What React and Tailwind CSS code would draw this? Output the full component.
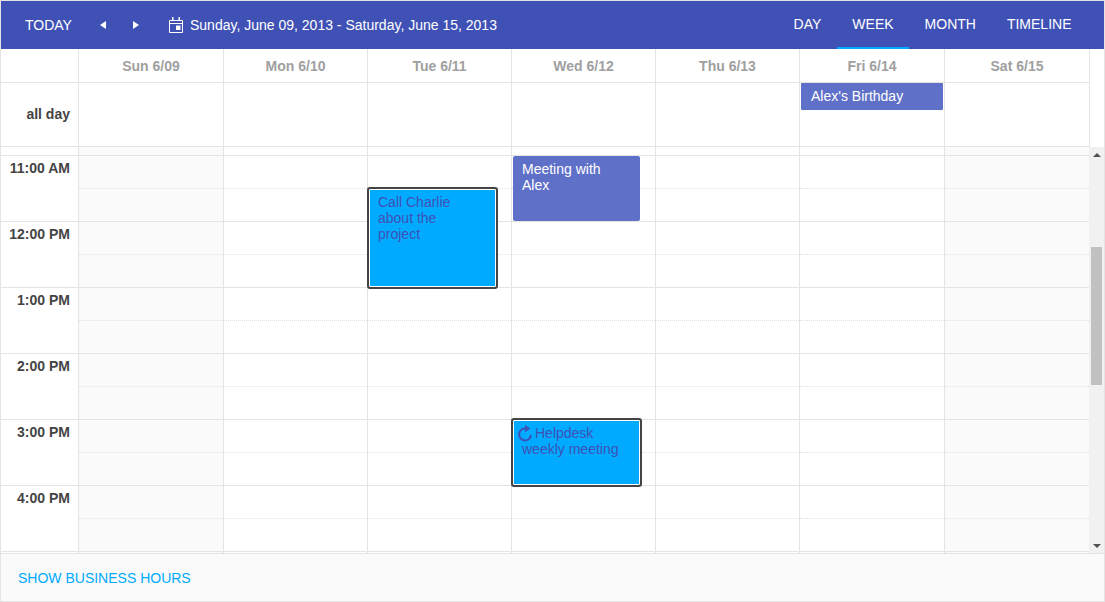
import React from 'react';

const days = [
    { label: 'Sun 6/09', width: 'w-[145px]', off: true },
    { label: 'Mon 6/10', width: 'w-[144px]' },
    { label: 'Tue 6/11', width: 'w-[144px]' },
    { label: 'Wed 6/12', width: 'w-[144px]' },
    { label: 'Thu 6/13', width: 'w-[144px]' },
    { label: 'Fri 6/14', width: 'w-[145px]' },
    { label: 'Sat 6/15', width: 'w-[145px]', off: true },
];

const hours = ['11:00 AM', '12:00 PM', '1:00 PM', '2:00 PM', '3:00 PM', '4:00 PM'];
const views = ['DAY', 'WEEK', 'MONTH', 'TIMELINE'];

const CalendarIcon = () => (
    <svg width="14" height="16" viewBox="0 0 14 16" className="shrink-0">
        <path d="M.5 3.5h13v12H.5zM.5 6.5h13" fill="none" stroke="#fff" strokeWidth="1" />
        <path d="M3 0h1.5v3.5H3zM9.5 0H11v3.5H9.5zM7 8.5h4.5V13H7z" fill="#fff" />
    </svg>
);

const RecurIcon = () => (
    <svg width="14" height="17" viewBox="0 0 14 17" className="inline-block align-baseline my-[-4px] ml-[-4px] mr-[3px]">
        <path d="M7 3.6A5.9 5.9 0 1 0 12.9 9.9" fill="none" stroke="#3f51b5" strokeWidth="2" />
        <path d="M7 0v7.2L12.4 3.6z" fill="#3f51b5" />
    </svg>
);

const Birthday = () => (
    <div className="absolute left-[1px] top-0 w-[142px] h-[27px] bg-[#5f70c8] rounded-[1px] pl-[10px] text-white leading-[26px]">
        Alex's Birthday
    </div>
);

const Meeting = () => (
    <div className="absolute z-10 left-[1px] top-[9px] w-[127px] h-[65px] bg-[#5f70c8] rounded-[2px] pl-[9px] pt-[5px] pr-[30px] text-white leading-4">
        Meeting with Alex
    </div>
);

const FocusedEvent = ({ className, children }) => (
    <div className={`absolute z-10 left-[-1px] w-[131px] bg-[#00aaff] border-2 border-[#444] rounded-[3px] shadow-[inset_0_0_0_1px_#fff] text-[#3f51b5] leading-4 ${className}`}>
        {children}
    </div>
);

const DayColumn = ({ day, last, children }) => (
    <div className={`relative h-full ${last ? 'w-[144px]' : `${day.width} border-r border-[#e4e4e4]`} ${day.off ? 'bg-[#fafafa]' : ''}`}>
        <div className="h-[9px] border-b border-[#e4e4e4]" />
        {hours.map((hour) => (
            <div key={hour} className="h-[66px] border-b border-[#e4e4e4]">
                <div className="h-[33px] border-b border-dotted border-[#e2e2e2]" />
            </div>
        ))}
        {children}
    </div>
);

export default function App() {
    return (
        <div className="w-[1105px] h-[602px] border border-[#e4e4e4] overflow-hidden flex flex-col bg-white text-sm font-['Liberation_Sans',Arial,sans-serif]">
            <div className="h-[48px] shrink-0 flex items-center bg-[#3f51b5] text-white pl-[24px] pr-[17px]">
                <span className="w-[46px]">TODAY</span>
                <div className="ml-[28px] w-[7px] h-[8px] flex items-center">
                    <svg width="7" height="8" viewBox="0 0 7 8"><path d="M7 0v8L1 4z" fill="#fff" /></svg>
                </div>
                <div className="ml-[26px] w-[7px] h-[8px] flex items-center">
                    <svg width="7" height="8" viewBox="0 0 7 8"><path d="M1 0v8l6-4z" fill="#fff" /></svg>
                </div>
                <div className="ml-[30px] flex items-center gap-[7px]">
                    <CalendarIcon />
                    <span>Sunday, June 09, 2013 - Saturday, June 15, 2013</span>
                </div>
                <div className="ml-auto flex h-full">
                    {views.map((view) => (
                        <div
                            key={view}
                            className={`h-full flex items-center px-[15.5px] border-b-2 ${view === 'WEEK' ? 'border-[#00aaff]' : 'border-transparent'}`}
                        >
                            {view}
                        </div>
                    ))}
                </div>
            </div>

            <div className="h-[34px] shrink-0 flex border-b border-[#e4e4e4] mr-[14px]">
                <div className="w-[78px] border-r border-[#e4e4e4]" />
                {days.map((day) => (
                    <div key={day.label} className={`${day.width} border-r border-[#e4e4e4] flex items-center justify-center font-bold text-[#a0a0a0]`}>
                        {day.label}
                    </div>
                ))}
            </div>

            <div className="h-[64px] shrink-0 flex border-b border-[#e4e4e4] mr-[14px]">
                <div className="w-[78px] border-r border-[#e4e4e4] flex items-center justify-end pr-[8px] pb-[2px] font-bold text-[#444]">all day</div>
                {days.map((day) => (
                    <div key={day.label} className={`relative ${day.width} border-r border-[#e4e4e4]`}>
                        {day.label === 'Fri 6/14' && <Birthday />}
                    </div>
                ))}
            </div>

            <div className="h-[407px] shrink-0 flex border-b border-[#e4e4e4] overflow-hidden">
                <div className="w-[78px] h-full border-r border-[#e4e4e4]">
                    <div className="h-[9px] border-b border-[#e4e4e4]" />
                    {hours.map((hour) => (
                        <div key={hour} className="h-[66px] border-b border-[#e4e4e4] pt-[4px] pr-[8px] text-right font-bold text-[#444] leading-4">
                            {hour}
                        </div>
                    ))}
                </div>
                {days.map((day, i) => (
                    <DayColumn key={day.label} day={day} last={i === days.length - 1}>
                        {day.label === 'Tue 6/11' && (
                            <FocusedEvent className="top-[40px] h-[102px] pl-[9px] pt-[5px] pr-[30px]">
                                Call Charlie about the project
                            </FocusedEvent>
                        )}
                        {day.label === 'Wed 6/12' && (
                            <>
                                <Meeting />
                                <FocusedEvent className="top-[271px] h-[69px] pl-[9px] pt-[5px] pr-[10px]">
                                    <RecurIcon />
                                    Helpdesk weekly meeting
                                </FocusedEvent>
                            </>
                        )}
                    </DayColumn>
                ))}
                <div className="w-[15px] h-full bg-[#f1f1f1] flex flex-col items-center">
                    <div className="h-[15px] w-full flex items-center justify-center">
                        <svg width="8" height="4" viewBox="0 0 8 4"><path d="M4 0l4 4H0z" fill="#505050" /></svg>
                    </div>
                    <div className="mt-[85px] h-[138px] w-[11px] bg-[#c1c1c1]" />
                    <div className="mt-auto h-[15px] w-full flex items-center justify-center">
                        <svg width="8" height="4" viewBox="0 0 8 4"><path d="M4 4l4-4H0z" fill="#505050" /></svg>
                    </div>
                </div>
            </div>

            <div className="flex-1 bg-[#fafafa] flex items-center pl-[17px] text-[#00aaff]">
                SHOW BUSINESS HOURS
            </div>
        </div>
    );
}
